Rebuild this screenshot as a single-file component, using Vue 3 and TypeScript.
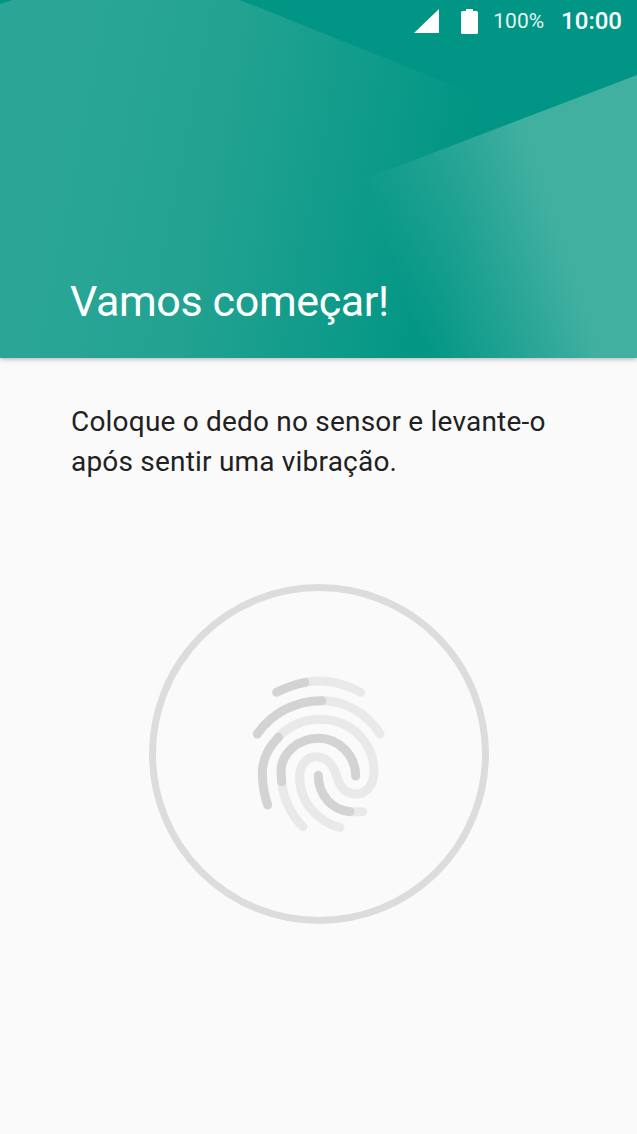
<script setup lang="ts">
const title = "Vamos começar!";
const battery = "100%";
const clock = "10:00";
</script>

<template>
  <div class="screen">
    <header class="hero">
      <!-- facetas do fundo -->
      <svg class="facets" viewBox="0 0 637 358" preserveAspectRatio="none">
        <defs>
          <linearGradient id="base" gradientUnits="userSpaceOnUse" x1="60" y1="100" x2="470" y2="180">
            <stop offset="0" stop-color="#2ba696" />
            <stop offset="0.4" stop-color="#22a291" />
            <stop offset="1" stop-color="#009584" />
          </linearGradient>
          <linearGradient id="light" gradientUnits="userSpaceOnUse" x1="400" y1="290" x2="590" y2="225">
            <stop offset="0" stop-color="#42b0a1" stop-opacity="0" />
            <stop offset="0.85" stop-color="#42b0a1" />
            <stop offset="1" stop-color="#42b0a1" />
          </linearGradient>
        </defs>
        <rect width="637" height="358" fill="url(#base)" />
        <polygon points="0,0 13,0 0,4" fill="#009584" />
        <polygon points="240,0 637,0 637,75 500,127 470,92" fill="#009584" />
        <polygon points="637,75 354,183 330,358 637,358" fill="url(#light)" />
      </svg>

      <div class="status">
        <svg class="signal" viewBox="0 0 25 24" width="25" height="24">
          <polygon points="25,0 25,24 0,24" fill="#fff" />
        </svg>
        <svg class="battery" viewBox="0 0 17 25" width="17" height="25">
          <path d="M5 2V0h7v2h3.5a1.5 1.5 0 0 1 1.5 1.5v20a1.5 1.5 0 0 1-1.5 1.5h-14A1.5 1.5 0 0 1 0 23.5v-20A1.5 1.5 0 0 1 1.5 2z" fill="#fff" />
        </svg>
        <span class="percent">{{ battery }}</span>
        <span class="clock">{{ clock }}</span>
      </div>

      <h1 class="title">{{ title }}</h1>
    </header>

    <main class="content">
      <p class="hint">Coloque o dedo no sensor e levante-o<br />após sentir uma vibração.</p>

      <div class="ring">
        <svg class="print" viewBox="0 0 510 540" width="170" height="180" fill="none" stroke-width="27" stroke-linecap="round">
          <g stroke="#e9e9e9">
            <path d="M225 67C285 56 345 70 392 97" />
            <path d="M276 122C345 122 410 158 450 222" />
            <path d="M145 232C180 195 225 178 270 178C360 178 432 245 432 335C432 378 405 402 378 402C335 402 325 365 315 335C303 305 283 290 258 290C230 290 209 315 209 350C209 430 265 485 330 503" />
            <path d="M155 365C160 420 185 465 218 500" />
            <path d="M360 455H398" />
          </g>
          <g stroke="#d3d3d3">
            <path d="M140 97C165 84 195 73 225 67" />
            <path d="M82 222C125 160 195 122 276 122" />
            <path d="M113 435C103 405 97 375 97 340C97 300 115 262 145 232" />
            <path d="M155 365L153 335C153 280 205 235 265 235C325 235 377 285 377 348" />
            <path d="M265 346C265 405 305 450 360 455" />
          </g>
        </svg>
      </div>
    </main>
  </div>
</template>

<style scoped>
.screen {
  width: 637px;
  height: 1134px;
  display: flex;
  flex-direction: column;
  background: #fafafa;
  font-family: Roboto, "Noto Sans", sans-serif;
  overflow: hidden;
}
.hero {
  position: relative;
  flex: 0 0 358px;
  display: flex;
  flex-direction: column;
  justify-content: space-between;
  box-shadow: 0 1px 5px rgba(0, 0, 0, 0.3);
  color: #fff;
}
.facets {
  position: absolute;
  inset: 0;
  width: 100%;
  height: 100%;
}
.status {
  position: relative;
  display: flex;
  justify-content: flex-end;
  align-items: center;
  height: 42px;
  padding-right: 15px;
}
.signal {
  margin-right: 22px;
}
.battery {
  margin-right: 15px;
}
.percent {
  font-size: 21px;
  font-weight: 400;
  margin-right: 17px;
  color: #e4f4f1;
}
.clock {
  font-size: 24px;
  font-weight: 500;
}
.title {
  position: relative;
  margin: 0 0 29px 70px;
  font-size: 43px;
  line-height: 56px;
  font-weight: 400;
  letter-spacing: -0.38px;
}
.content {
  flex: 1;
  display: flex;
  flex-direction: column;
  align-items: center;
}
.hint {
  align-self: stretch;
  margin: 44px 0 0 71px;
  font-size: 28px;
  line-height: 40px;
  letter-spacing: 0.2px;
  color: #212121;
}
.ring {
  margin-top: 102px;
  width: 340px;
  height: 340px;
  box-sizing: border-box;
  border: 7px solid #dcdcdc;
  border-radius: 50%;
  display: flex;
  align-items: center;
  justify-content: center;
}
.print {
  margin: 0 7px 8px 0;
}
</style>
